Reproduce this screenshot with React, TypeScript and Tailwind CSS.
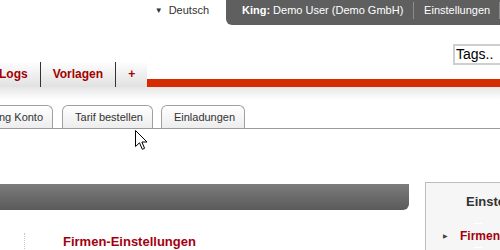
import React from 'react';

export default function App() {
  return (
    <div className="relative w-[500px] h-[250px] overflow-hidden bg-white font-['Liberation_Sans',Arial,sans-serif]">
      {/* Top bar */}
      <div className="flex h-[25px] justify-end">
        <div className="flex items-center pb-[4px] mr-[17px] text-[11px] leading-[13px] text-[#333] whitespace-nowrap">
          <span className="text-[8px] mr-[6px]">▼</span>
          <span>Deutsch</span>
        </div>
        <div className="w-[274px] shrink-0 flex items-center pb-[4px] pl-[16px] bg-[#5f5f5f] rounded-bl-[6px] text-[11px] leading-[13px] text-white whitespace-nowrap">
          <span className="font-bold">King:</span>
          <span className="ml-[3px]">Demo User (Demo GmbH)</span>
          <span className="mx-[10px] w-px h-[17px] bg-[#8c8c8c]"></span>
          <span>Einstellungen</span>
          <span className="ml-[9px] w-px h-[17px] bg-[#8c8c8c]"></span>
        </div>
      </div>

      {/* Tags search */}
      <div className="flex justify-end mt-[19px] h-[21px]">
        <input
          readOnly
          value="Tags.."
          className="w-[60px] h-[21px] mr-[-13px] shrink-0 border-2 border-[#cfcfcf] bg-white px-[1px] text-[14px] text-black outline-none"
        />
      </div>

      {/* Main navigation */}
      <div className="flex items-end h-[25px] mt-[-3px]">
        <div className="h-full ml-[-13px] px-3 pb-[1px] flex items-center border-r border-[#333] bg-gradient-to-b from-[#fefefe] to-[#e1e1e1] text-[12px] font-bold text-[#a30000]">
          Logs
        </div>
        <div className="h-full px-3 pb-[1px] flex items-center border-r border-[#333] bg-gradient-to-b from-[#fefefe] to-[#e1e1e1] text-[12px] font-bold text-[#a30000]">
          Vorlagen
        </div>
        <div className="h-full px-3 pb-[1px] flex items-center bg-gradient-to-b from-[#fefefe] to-[#e1e1e1] text-[12px] font-bold text-[#a30000]">
          +
        </div>
        <div className="flex-1 h-[8px] bg-[#d42b00]"></div>
      </div>
      <div className="h-[13px] bg-gradient-to-b from-[#e6e6e6] to-white"></div>

      {/* Sub tabs */}
      <div className="flex items-end gap-2 pt-[5px] border-b border-[#9a9a9a]">
        <div className="h-[23px] ml-[-14px] mr-[1px] pl-3 pr-[9px] flex items-center border border-b-0 border-[#a0a0a0] rounded-t-[6px] bg-gradient-to-b from-white to-[#ededed] text-[11px] text-[#333] whitespace-nowrap">
          ng Konto
        </div>
        <div className="h-[23px] pl-3 pr-[9px] flex items-center border border-b-0 border-[#a0a0a0] rounded-t-[6px] bg-gradient-to-b from-white to-[#ededed] text-[11px] text-[#333] whitespace-nowrap">
          Tarif bestellen
        </div>
        <div className="h-[23px] pl-3 pr-[9px] flex items-center border border-b-0 border-[#a0a0a0] rounded-t-[6px] bg-gradient-to-b from-white to-[#ededed] text-[11px] text-[#333] whitespace-nowrap">
          Einladungen
        </div>
      </div>

      {/* Content */}
      <div className="flex">
        <div className="w-[409px] shrink-0 pt-[55px]">
          <div className="h-[26px] rounded-br-[6px] bg-gradient-to-b from-[#7c7c7c] to-[#5a5a5a]"></div>
          <div className="mt-[23px] ml-[24px] pl-[38px] pt-[1px] h-[40px] border-l border-dotted border-[#c8c8c8]">
            <h2 className="text-[13px] leading-[16px] font-bold text-[#a3000f] whitespace-nowrap">Firmen-Einstellungen</h2>
          </div>
        </div>
        <div className="ml-[16px] mt-[53px] w-[120px] shrink-0 h-[100px] border border-[#bdbdbd] bg-[#f6f6f6]">
          <div className="pt-[11px] pl-[40px] text-[13px] leading-[16px] font-bold text-[#333] whitespace-nowrap">Einstellungen</div>
          <div className="mt-[13px] ml-[48px] w-[8px] h-px bg-white"></div>
          <div className="flex items-center mt-[5px] pl-[17px] h-[14px] whitespace-nowrap">
            <span className="text-[6px] text-[#444] mr-[12px]">▶</span>
            <span className="text-[12px] font-bold text-[#a3000f]">Firmen-Einstellungen</span>
          </div>
          <div className="mt-[4px] ml-[48px] w-[8px] h-px bg-white"></div>
        </div>
      </div>

      {/* Mouse cursor */}
      <svg className="absolute left-[135px] top-[130px]" width="14" height="21" viewBox="0 0 14 21">
        <path d="M0.5 0.5 L0.5 16.5 L4.5 12.8 L7.3 19.3 L9.6 18.3 L6.9 12 L12 12 Z" fill="white" stroke="black" strokeWidth="1" strokeLinejoin="round" />
      </svg>
    </div>
  );
}
